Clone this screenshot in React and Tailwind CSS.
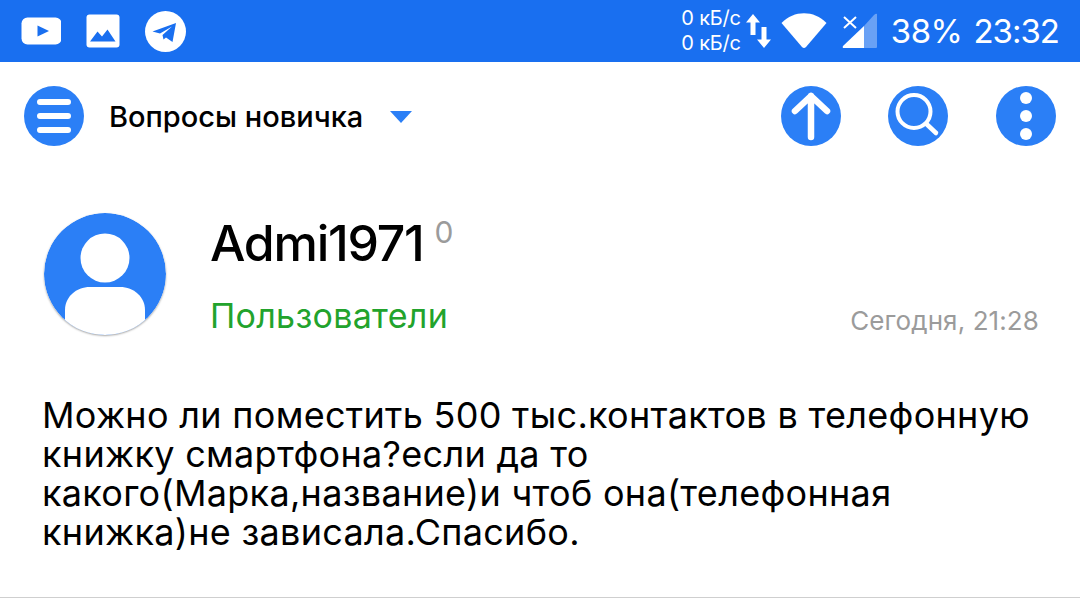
import React from "react";

const font = { fontFamily: "Inter, sans-serif" };

function StatusIcons() {
  return (
    <div className="flex items-center gap-[25px]">
      <svg width="40" height="28" viewBox="0 0 40 28">
        <rect x="0.5" y="0.5" width="40" height="27" rx="6" fill="#fff" />
        <path d="M16.5 8.5 L28 14 L16.5 19.5 Z" fill="#196ff0" />
      </svg>
      <svg width="34" height="34" viewBox="0 0 34 34">
        <rect width="33" height="33" x="0.5" y="0.5" rx="3" fill="#fff" />
        <path d="M4 27.5 L11.5 17.5 L16 22.5 L21.5 15.5 L29.5 27.5 Z" fill="#196ff0" />
      </svg>
      <svg width="41" height="41" viewBox="0 0 41 41">
        <circle cx="20.5" cy="20.5" r="20.5" fill="#fff" />
        <path d="M7.5 20.5 L31 12 L27.5 31 L21 26.5 L18.5 28.5 L17.5 24 L27 15.5 L15 22.5 Z" fill="#196ff0" />
      </svg>
    </div>
  );
}

function SystemTray() {
  return (
    <div className="flex items-center">
      <div className="flex flex-col items-end text-[20px] leading-[25px] text-white mr-[3px] tracking-[-0.2px]">
        <span className="whitespace-nowrap">0 кБ/с</span>
        <span className="whitespace-nowrap">0 кБ/с</span>
      </div>
      <svg width="28" height="36" viewBox="0 0 28 36" className="mr-[9px]">
        <path d="M9 1 L16 9.5 H11.5 V22 H6.5 V9.5 H2 Z" fill="#fff" />
        <path d="M20 35 L13 26.5 H17.5 V14 H22.5 V26.5 H27 Z" fill="#fff" />
      </svg>
      <svg width="46" height="36" viewBox="0 0 46 36" className="mr-[15px]">
        <path d="M0.5 10 C13 -3 33 -3 45.5 10 L25 34 Q23 36 21 34 Z" fill="#fff" />
      </svg>
      <svg width="36" height="36" viewBox="0 0 36 36" className="mr-[13px]">
        <path d="M2 4 L14 15 M14 4 L2 15" stroke="#fff" strokeWidth="2" fill="none" />
        <path d="M35 1 V34 Q35 35 34 35 H22 V13 L32 2 Q34 0 35 1 Z" fill="#fff" fillOpacity="0.35" />
        <path d="M22 13 V35 H2 Q0 35 1 33 Z" fill="#fff" />
      </svg>
      <span className="text-[33px] leading-none text-white mr-[11px] tracking-[-0.5px]">38%</span>
      <span className="text-[33px] leading-none text-white tracking-[-1px]">23:32</span>
    </div>
  );
}

function RoundBtn({ children }) {
  return (
    <div className="w-[60px] h-[60px] rounded-full bg-[#2b7ff6] flex items-center justify-center shrink-0">
      {children}
    </div>
  );
}

function Toolbar() {
  return (
    <div className="flex items-center justify-between pl-[24px] pr-[24px] h-[108px]">
      <div className="flex items-center">
        <RoundBtn>
          <svg width="36" height="36" viewBox="0 0 36 36">
            <path d="M4 4 H32 M4 18 H32 M4 32 H32" stroke="#fff" strokeWidth="6" strokeLinecap="round" fill="none" />
          </svg>
        </RoundBtn>
        <span className="ml-[25px] mt-[1px] text-[29px] font-medium text-black">Вопросы новичка</span>
        <svg width="22" height="12" viewBox="0 0 22 12" className="ml-[27px] mt-[2px]">
          <path d="M0 0 H22 L11 12 Z" fill="#2b7ff6" />
        </svg>
      </div>
      <div className="flex items-center gap-[48px]">
        <div className="mr-[-1px]">
          <RoundBtn>
            <svg width="60" height="60" viewBox="0 0 60 60">
              <path d="M30 51 V10 M14 25 L30 10 L46 25" stroke="#fff" strokeWidth="6.5" strokeLinecap="round" strokeLinejoin="round" fill="none" />
            </svg>
          </RoundBtn>
        </div>
        <RoundBtn>
          <svg width="60" height="60" viewBox="0 0 60 60">
            <circle cx="26" cy="25.5" r="16.5" stroke="#fff" strokeWidth="4" fill="none" />
            <path d="M38.5 38 L48 47" stroke="#fff" strokeWidth="4.5" strokeLinecap="round" fill="none" />
          </svg>
        </RoundBtn>
        <RoundBtn>
          <svg width="60" height="60" viewBox="0 0 60 60">
            <circle cx="30" cy="12" r="6" fill="#fff" />
            <circle cx="30" cy="30" r="6" fill="#fff" />
            <circle cx="30" cy="48" r="6" fill="#fff" />
          </svg>
        </RoundBtn>
      </div>
    </div>
  );
}

function Avatar() {
  return (
    <svg width="122" height="122" viewBox="0 0 122 122" className="shrink-0 rounded-full shadow-[0_1px_2px_rgba(0,0,0,0.35)]">
      <circle cx="61" cy="61" r="61" fill="#2b7ff6" />
      <circle cx="61" cy="45" r="24.5" fill="#fff" />
      <path d="M21 107 V97 C21 84 32 74 46 74 H76 C90 74 101 84 101 97 V107 C80 127 42 127 21 107 Z" fill="#fff" />
    </svg>
  );
}

export default function App() {
  return (
    <div className="w-[1080px] h-[598px] bg-white overflow-hidden flex flex-col" style={font}>
      <div className="h-[62px] bg-[#196ff0] flex items-center justify-between pl-[21px] pr-[21px] shrink-0">
        <StatusIcons />
        <SystemTray />
      </div>
      <Toolbar />
      <div className="flex pl-[44px] pr-[41px] pt-[43px]">
        <Avatar />
        <div className="flex-1 ml-[44px] flex flex-col">
          <div className="flex items-start">
            <span className="text-[50px] leading-[60px] font-medium text-black tracking-[-1.25px]">Admi1971</span>
            <span className="text-[30px] leading-[36px] text-[#9b9b9b] ml-[11px] mt-[1px]">0</span>
          </div>
          <div className="flex items-end justify-between mt-[23px]">
            <span className="text-[34px] leading-[40px] text-[#22a32c] tracking-[0.3px]">Пользователи</span>
            <span className="text-[26px] leading-[32px] text-[#9b9b9b] tracking-[0.1px] mb-[-1px]">Сегодня, 21:28</span>
          </div>
        </div>
      </div>
      <p className="mt-[60px] pl-[42px] text-[36px] leading-[39px] text-black tracking-[0.3px] whitespace-nowrap">
        Можно ли поместить 500 тыс.контактов в телефонную
        <br />
        книжку смартфона?если да то
        <br />
        какого(Марка,название)и чтоб она(телефонная
        <br />
        книжка)не зависала.Спасибо.
      </p>
      <div className="mt-auto h-[1px] bg-[#cfcfcf]" />
    </div>
  );
}
